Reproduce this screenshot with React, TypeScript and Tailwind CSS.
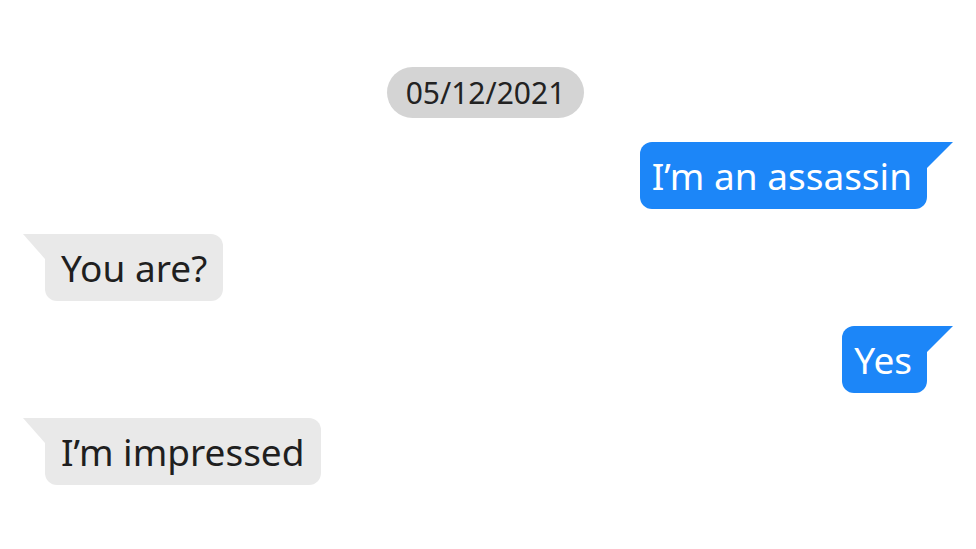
import React from "react";

type Msg = { id: number; text: string; mine: boolean };

const MESSAGES: Msg[] = [
  { id: 1, text: "I’m an assassin", mine: true },
  { id: 2, text: "You are?", mine: false },
  { id: 3, text: "Yes", mine: true },
  { id: 4, text: "I’m impressed", mine: false },
];

function Bubble({ msg }: { msg: Msg }) {
  if (msg.mine) {
    return (
      <div className="flex justify-end">
        <div className="h-[67px] flex items-center pl-[12px] pr-[15px] rounded-[12px] rounded-tr-none bg-[#1c86f8] text-white">
          {msg.text}
        </div>
        <svg width="26" height="26" viewBox="0 0 26 26" className="shrink-0 block">
          <polygon points="0,0 26,0 0,26" fill="#1c86f8" />
        </svg>
      </div>
    );
  }
  return (
    <div className="flex justify-start">
      <svg width="22" height="25" viewBox="0 0 22 25" className="shrink-0 block">
        <polygon points="0,0 22,0 22,25" fill="#e9e9e9" />
      </svg>
      <div className="h-[67px] flex items-center px-[16px] rounded-[12px] rounded-tl-none bg-[#e9e9e9] text-[#1f1f1f]">
        {msg.text}
      </div>
    </div>
  );
}

export default function App() {
  return (
    <div className="w-[976px] h-[549px] bg-white overflow-hidden flex flex-col gap-[24px] pt-[67px] px-[23px] font-['Noto_Sans',sans-serif] text-[37px] leading-none">
      <div className="flex justify-center pr-[5px]">
        <div className="h-[51px] px-[19px] flex items-center rounded-full bg-[#d4d4d4] text-[30px] text-[#222]">
          05/12/2021
        </div>
      </div>
      <div className="flex flex-col gap-[25px]">
        {MESSAGES.map((m) => (
          <Bubble key={m.id} msg={m} />
        ))}
      </div>
    </div>
  );
}
